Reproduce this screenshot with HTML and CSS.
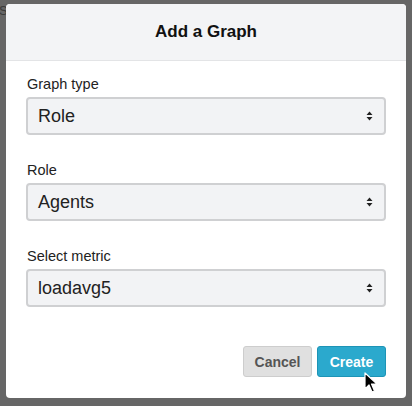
FILE: index.html
```html
<!DOCTYPE html>
<html>
<head>
  <meta charset="utf-8">
  <title>Add a Graph</title>
  <link rel="stylesheet" href="styles.css">
</head>
<body>
<div class="Backdrop">
  <span class="BackdropText">S</span>
</div>

<div class="Modal">
  <div class="ModalHeader">
    <h1>Add a Graph</h1>
  </div>

  <div class="ModalBody">
    <div class="Field">
      <label>Graph type</label>
      <div class="Select">
        <span>Role</span>
        <svg class="SelectArrow" width="7" height="10" viewBox="0 0 7 10"><path d="M3.5 0.5 L6.5 4 L0.5 4 Z M3.5 9.5 L6.5 6 L0.5 6 Z" fill="#222"/></svg>
      </div>
    </div>

    <div class="Field">
      <label>Role</label>
      <div class="Select">
        <span>Agents</span>
        <svg class="SelectArrow" width="7" height="10" viewBox="0 0 7 10"><path d="M3.5 0.5 L6.5 4 L0.5 4 Z M3.5 9.5 L6.5 6 L0.5 6 Z" fill="#222"/></svg>
      </div>
    </div>

    <div class="Field">
      <label>Select metric</label>
      <div class="Select">
        <span>loadavg5</span>
        <svg class="SelectArrow" width="7" height="10" viewBox="0 0 7 10"><path d="M3.5 0.5 L6.5 4 L0.5 4 Z M3.5 9.5 L6.5 6 L0.5 6 Z" fill="#222"/></svg>
      </div>
    </div>
  </div>

  <div class="ModalFooter">
    <button class="Button Button--cancel" type="button">Cancel</button>
    <button class="Button Button--create" type="button">Create</button>
  </div>
</div>

<!-- mouse pointer -->
<svg class="Pointer" width="14" height="22" viewBox="0 0 14 22">
  <path d="M1 1 L1 17 L5 13 L8 20 L10.5 19 L7.5 12 L13 12 Z" fill="#000" stroke="#fff" stroke-width="1.2" stroke-linejoin="round"/>
</svg>
</body>
</html>
```

FILE: styles.css
```css
html, body {
  margin: 0;
  padding: 0;
}
body {
  width: 412px;
  height: 406px;
  background-color: #666;
  font-family: "Liberation Sans", Arial, sans-serif;
  color: #222;
  overflow: hidden;
  position: relative;
}
.Backdrop {
  position: absolute;
  top: 0;
  left: 0;
  right: 0;
  bottom: 0;
}
.BackdropText {
  position: absolute;
  top: 3px;
  left: -1px;
  font-size: 13px;
  color: #3a3a3a;
}
.Modal {
  position: relative;
  box-sizing: border-box;
  width: 400px;
  height: 394px;
  margin: 4px 0 0 6px;
  background-color: #fff;
  border-radius: 4px;
  overflow: hidden;
  display: flex;
  flex-direction: column;
}
.ModalHeader {
  box-sizing: border-box;
  height: 57px;
  display: flex;
  align-items: center;
  justify-content: center;
  background-color: #f3f4f6;
  border-bottom: 1px solid #e3e4e6;
}
.ModalHeader h1 {
  margin: 0;
  font-size: 17px;
  font-weight: bold;
  color: #111;
}
.ModalBody {
  padding: 13px 20px 0 20px;
  display: flex;
  flex-direction: column;
  gap: 25px;
}
.Field {
  display: flex;
  flex-direction: column;
  gap: 3px;
}
.Field label {
  padding-left: 1px;
  font-size: 14.5px;
  line-height: 20px;
  color: #222;
}
.Select {
  box-sizing: border-box;
  height: 38px;
  display: flex;
  align-items: center;
  justify-content: space-between;
  padding: 0 11px 0 10px;
  background-color: #f2f3f5;
  border: 2px solid #cfd0d2;
  border-radius: 4px;
  font-size: 18px;
  color: #222;
}
.SelectArrow {
  display: block;
}
.ModalFooter {
  margin-top: auto;
  padding: 0 20px 21px 0;
  display: flex;
  justify-content: flex-end;
  gap: 5px;
}
.Button {
  box-sizing: border-box;
  width: 69px;
  height: 31px;
  border-radius: 3px;
  font: inherit;
  font-size: 14px;
  font-weight: bold;
  padding: 0;
}
.Button--cancel {
  background-color: #e0e0e0;
  border: 1px solid #cdcdcd;
  color: #555;
}
.Button--create {
  background-color: #2ba9cd;
  border: 1px solid #1d94b6;
  color: #fff;
}
.Pointer {
  position: absolute;
  left: 364px;
  top: 372px;
}
```
